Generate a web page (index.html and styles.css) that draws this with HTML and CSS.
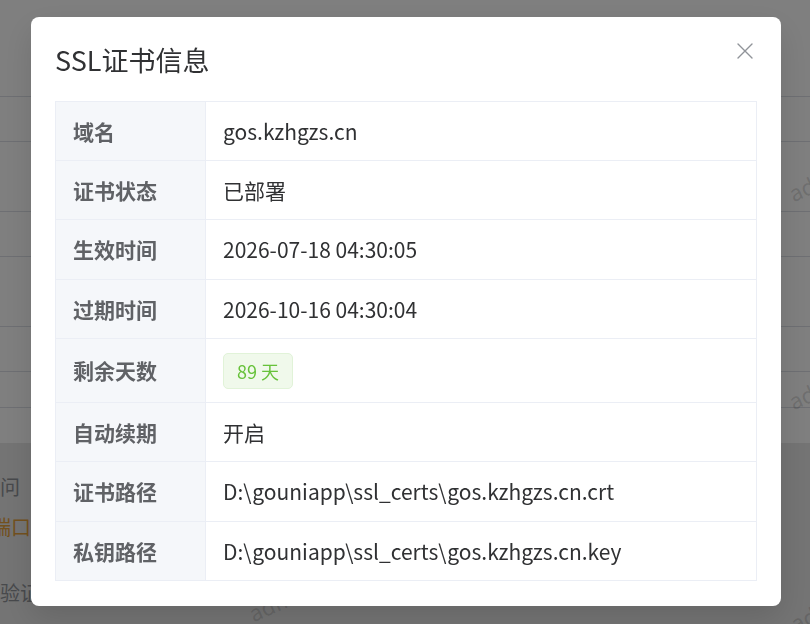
FILE: index.html
```html
<!DOCTYPE html>
<html lang="zh-CN">
<head>
<meta charset="utf-8">
<title>SSL证书信息</title>
<link rel="stylesheet" href="styles.css">
</head>
<body>
  <div class="page">
    <div class="rows">
      <div class="row r-head"></div>
      <div class="row r-s"></div>
      <div class="row r-l"></div>
      <div class="row r-s"></div>
      <div class="row r-l"></div>
      <div class="row r-s"></div>
      <div class="row r-xs"></div>
      <div class="row r-last"></div>
    </div>
    <div class="form">
      <div class="form-line muted">问</div>
      <div class="form-line warn indent-b">端口</div>
      <div class="form-line muted spaced">验证</div>
    </div>
    <span class="wm wm-1">admin</span>
    <span class="wm wm-2">admin</span>
    <span class="wm wm-3">admin</span>
    <span class="wm wm-4">admin</span>
  </div>

  <div class="mask"></div>

  <div class="dialog" role="dialog" aria-label="SSL证书信息">
    <header class="dialog-header">
      <h2 class="dialog-title">SSL证书信息</h2>
      <button class="dialog-close" type="button" aria-label="关闭">
        <svg viewBox="0 0 16 16" width="16" height="16">
          <path d="M1 1 L15 15 M15 1 L1 15" stroke="currentColor" stroke-width="1.4" fill="none" stroke-linecap="round"/>
        </svg>
      </button>
    </header>
    <div class="dialog-body">
      <table class="desc">
        <tbody>
          <tr><th>域名</th><td>gos.kzhgzs.cn</td></tr>
          <tr><th>证书状态</th><td>已部署</td></tr>
          <tr><th>生效时间</th><td>2026-07-18 04:30:05</td></tr>
          <tr><th>过期时间</th><td>2026-10-16 04:30:04</td></tr>
          <tr><th>剩余天数</th><td class="tag-cell"><span class="tag">89 天</span></td></tr>
          <tr><th>自动续期</th><td>开启</td></tr>
          <tr><th>证书路径</th><td>D:\gouniapp\ssl_certs\gos.kzhgzs.cn.crt</td></tr>
          <tr><th>私钥路径</th><td>D:\gouniapp\ssl_certs\gos.kzhgzs.cn.key</td></tr>
        </tbody>
      </table>
    </div>
  </div>
</body>
</html>
```

FILE: styles.css
```css
* {
  box-sizing: border-box;
}

html,
body {
  margin: 0;
  padding: 0;
  width: 810px;
  height: 624px;
  overflow: hidden;
}

body {
  font-family: "Noto Sans CJK SC", "Noto Sans", sans-serif;
  color: #303133;
  background: #ffffff;
}

/* ---- page underneath the modal ---- */
.page {
  position: relative;
  width: 810px;
  height: 624px;
  overflow: hidden;
}

.rows {
  background: #ffffff;
}

.row {
  border-bottom: 1px solid #dcdfe6;
}

.r-head { height: 97px; }
.r-s { height: 45px; }
.r-l { height: 70px; }
.r-xs { height: 36px; }
.r-last { height: 35px; border-bottom: none; }

.form {
  background: #e8e8e8;
  height: 181px;
  padding-top: 24px;
  font-size: 20px;
}

.form-line {
  line-height: 40px;
  white-space: nowrap;
}

.muted { color: #909399; }
.warn { color: #e6a23c; }

.indent-b { margin-left: -9px; }
.spaced { margin-top: 26px; }

.wm {
  position: absolute;
  font-size: 22px;
  color: rgba(0, 0, 0, 0.14);
  transform: rotate(-24deg);
  transform-origin: left bottom;
  white-space: nowrap;
}

.wm-1 { left: 796px; top: 176px; }
.wm-2 { left: 796px; top: 384px; }
.wm-3 { left: 256px; top: 596px; }
.wm-4 { left: 798px; top: 606px; }

/* ---- modal overlay ---- */
.mask {
  position: fixed;
  inset: 0;
  background: rgba(0, 0, 0, 0.5);
}

.dialog {
  position: fixed;
  top: 17px;
  left: 31px;
  width: 750px;
  background: #ffffff;
  border-radius: 8px;
  padding: 25px 24px 25px;
  box-shadow: 0 12px 32px rgba(0, 0, 0, 0.12);
}

.dialog-header {
  position: relative;
}

.dialog-title {
  margin: 0;
  font-size: 27px;
  line-height: 36px;
  font-weight: 400;
  color: #303133;
}

.dialog-close {
  position: absolute;
  top: 1px;
  right: 4px;
  width: 16px;
  height: 16px;
  padding: 0;
  border: 0;
  background: none;
  color: #909399;
  display: flex;
}

.dialog-body {
  margin-top: 23px;
}

.desc {
  width: 100%;
  border-collapse: collapse;
  table-layout: fixed;
  font-size: 21px;
}

.desc th,
.desc td {
  border: 1px solid #ebeef5;
  padding: 13px 17px;
  line-height: 32.2px;
  text-align: left;
  vertical-align: middle;
}

.desc th {
  width: 150px;
  background: #f5f7fa;
  color: #606266;
  font-weight: 700;
}

.desc td {
  color: #303133;
  font-weight: 400;
}

.tag-cell {
  padding-left: 16px;
}

.tag {
  display: inline-flex;
  align-items: center;
  height: 36px;
  padding: 0 13px;
  font-size: 18px;
  line-height: 1;
  color: #67c23a;
  background: #f0f9eb;
  border: 1px solid #e1f3d8;
  border-radius: 5px;
  vertical-align: middle;
}
```
